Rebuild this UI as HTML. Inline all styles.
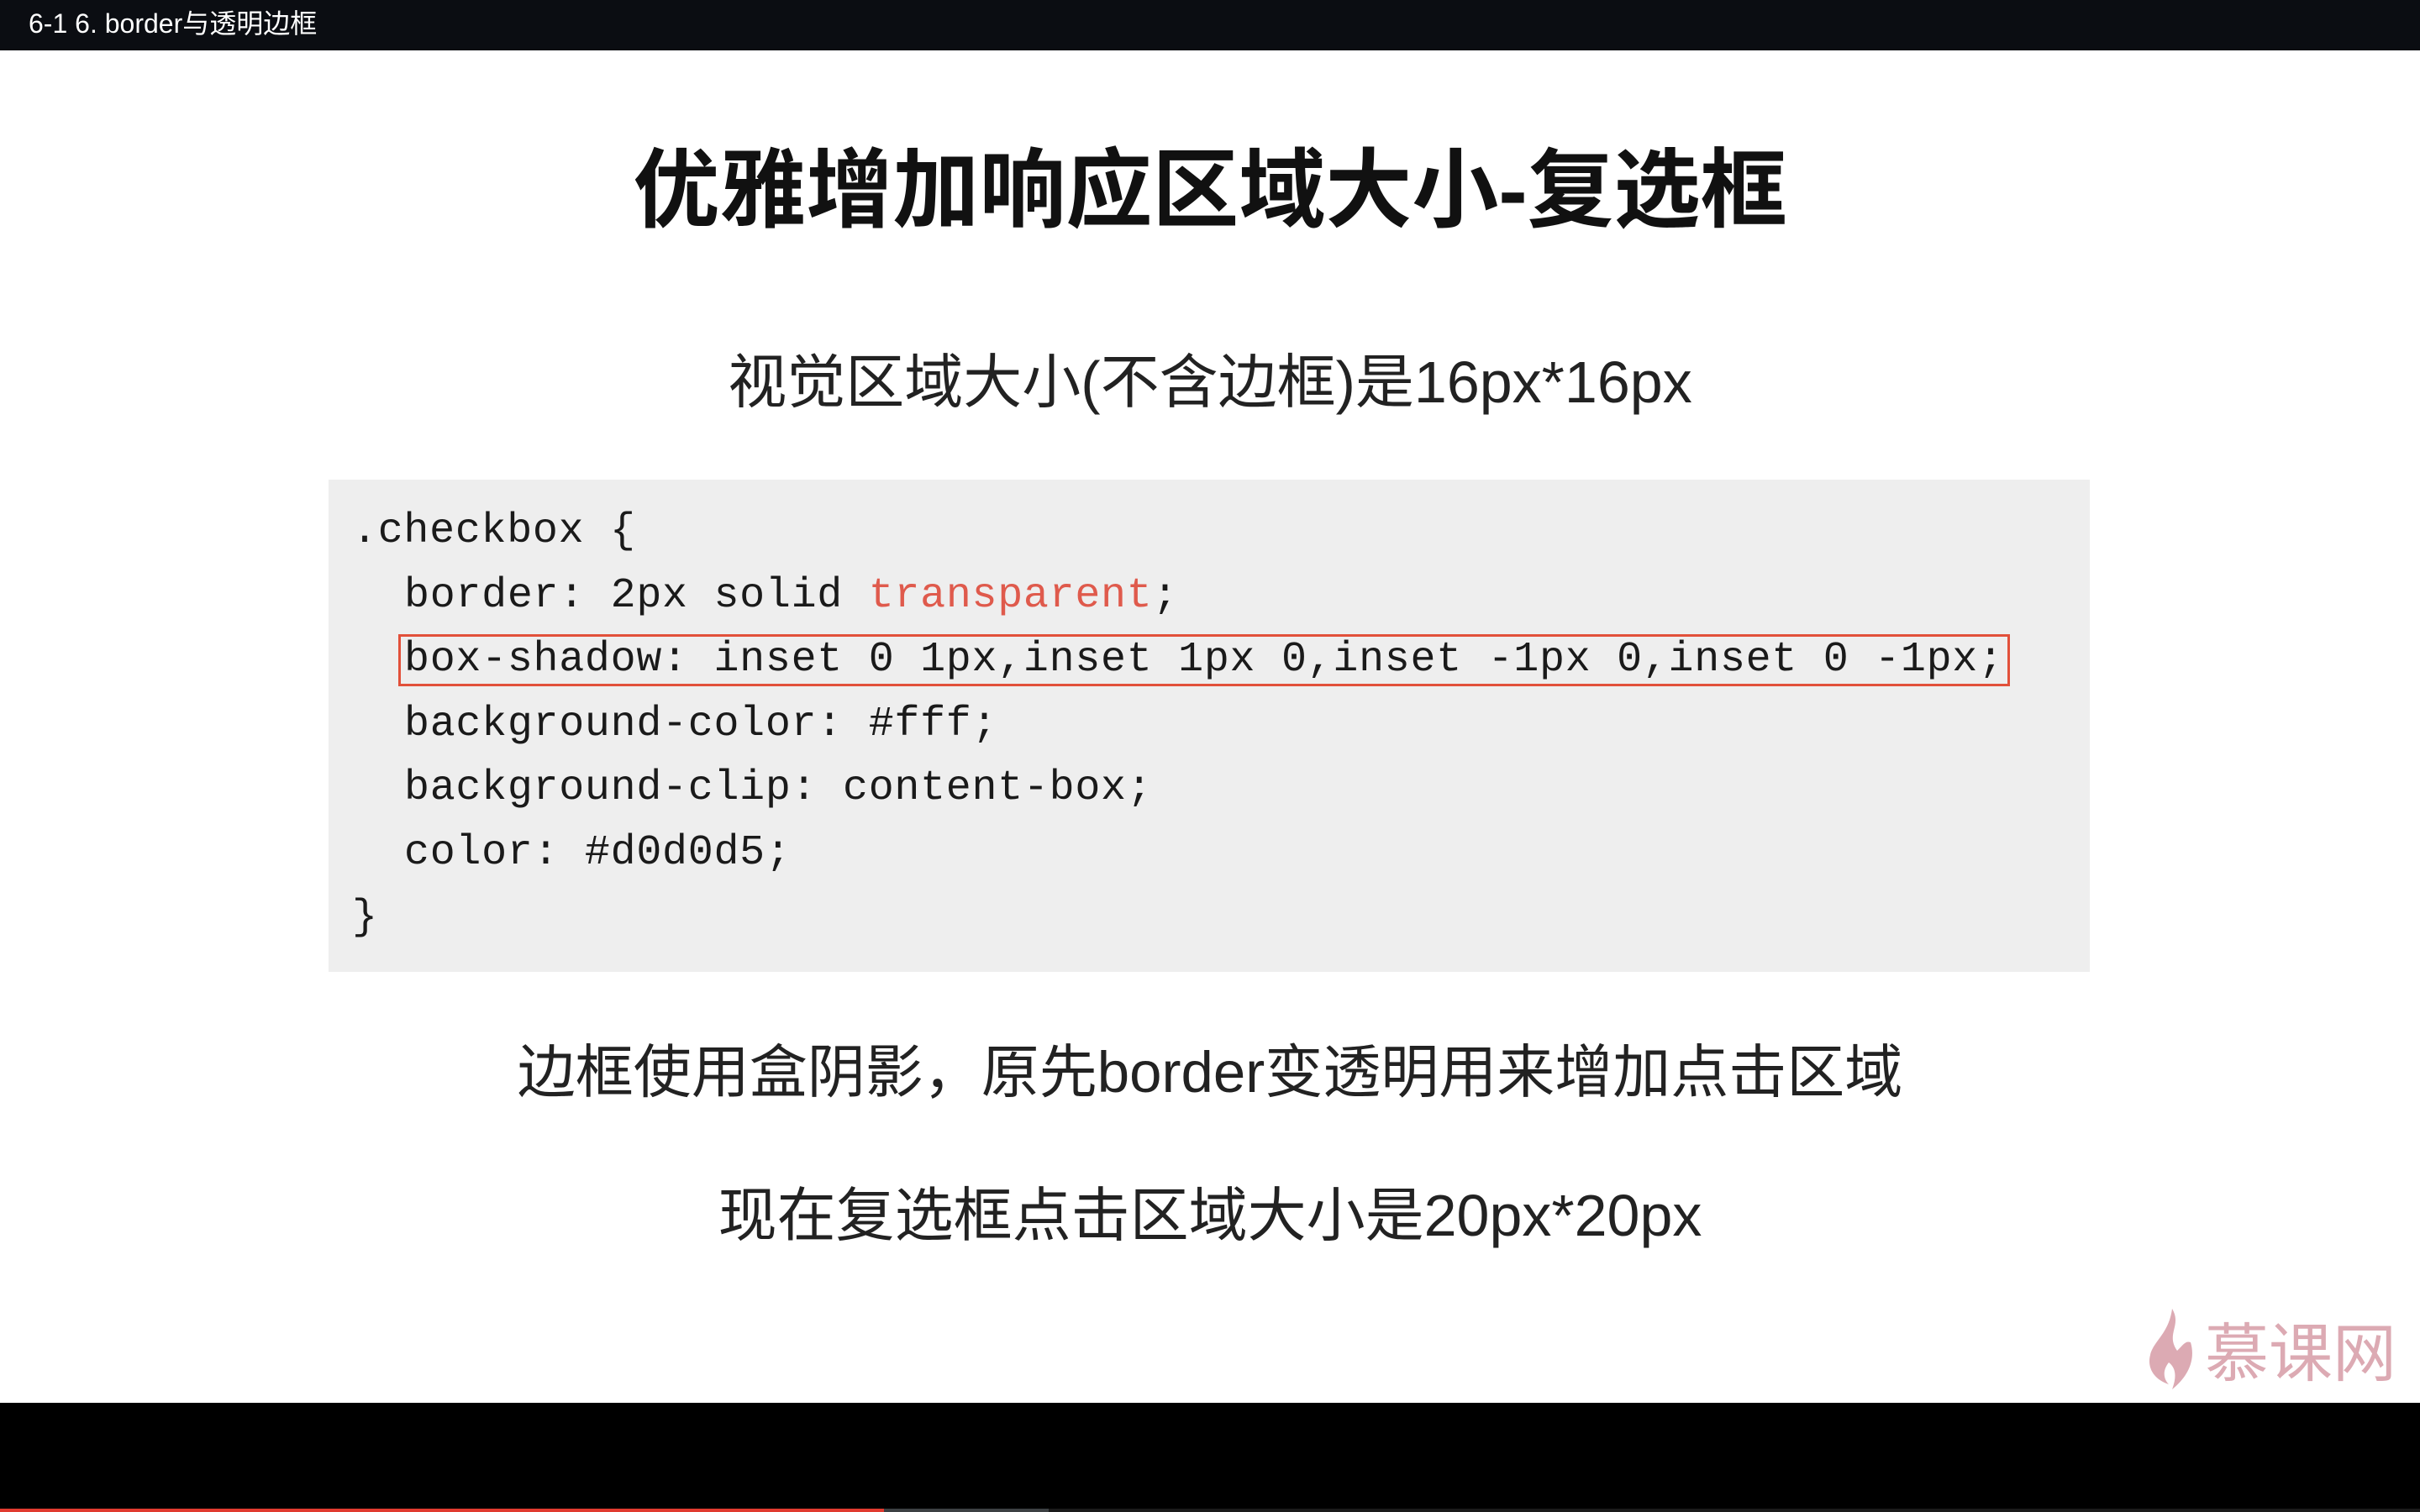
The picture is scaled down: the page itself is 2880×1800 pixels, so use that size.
<!DOCTYPE html>
<html><head><meta charset="utf-8"><style>
body{margin:0;width:2880px;height:1800px;background:#fff;position:relative;overflow:hidden;font-family:"Liberation Sans","Noto Sans CJK SC",sans-serif;}
.top{position:absolute;left:0;top:0;width:2880px;height:60px;background:#0b0d12;color:#fff;font-size:32px;line-height:60px;}
.top span{position:absolute;left:34px;top:-2px;}
.c{position:absolute;left:0;width:2880px;text-align:center;color:#111;white-space:nowrap;}
.code{position:absolute;left:391px;top:571px;width:2096px;height:586px;background:#eeeeee;}
.ln{position:absolute;font-family:"Liberation Mono",monospace;font-size:50px;color:#1a1a1a;white-space:pre;line-height:60px;letter-spacing:0.7px;}
.red{color:#df5a4c;}
.box{position:absolute;left:474px;top:755px;width:1912px;height:56px;border:3px solid #e2503a;}
.bot{position:absolute;left:0;top:1670px;width:2880px;height:130px;background:#000;}
</style></head><body>
<div class="top"><span>6-1 6. border与透明边框</span></div>
<div class="c" style="top:162px;font-size:103px;font-weight:bold;line-height:130px;">优雅增加响应区域大小-复选框</div>
<div class="c" style="top:413px;font-size:70px;line-height:84px;color:#222;">视觉区域大小(不含边框)是16px*16px</div>
<div class="code"></div>
<div class="ln" style="left:419px;top:603px;">.checkbox {</div>
<div class="ln" style="left:481px;top:680px;">border: 2px solid <span class="red">transparent</span>;</div>
<div class="ln" style="left:481px;top:756px;">box-shadow: inset 0 1px,inset 1px 0,inset -1px 0,inset 0 -1px;</div>
<div class="ln" style="left:481px;top:833px;">background-color: #fff;</div>
<div class="ln" style="left:481px;top:909px;">background-clip: content-box;</div>
<div class="ln" style="left:481px;top:986px;">color: #d0d0d5;</div>
<div class="ln" style="left:419px;top:1063px;">}</div>
<div class="box"></div>
<div class="c" style="top:1235px;font-size:69px;line-height:84px;color:#222;">边框使用盒阴影，原先border变透明用来增加点击区域</div>
<div class="c" style="top:1405px;font-size:70px;line-height:84px;color:#222;">现在复选框点击区域大小是20px*20px</div>
<svg style="position:absolute;left:2555px;top:1558px" width="60" height="100" viewBox="0 0 60 100"><path d="M30 0 C42 20 22 30 36 50 C44 42 46 38 52 40 C58 60 50 80 30 96 C36 80 34 70 26 64 C18 74 20 84 26 90 C8 84 0 70 4 55 C8 38 26 30 30 0Z" fill="#dcaab3"/></svg>
<div style="position:absolute;left:2624px;top:1568px;font-size:76px;line-height:90px;color:#dcaab3;">慕课网</div>
<div class="bot"></div>
<div style="position:absolute;left:0;top:1796px;width:1052px;height:4px;background:#e03a2f"></div>
<div style="position:absolute;left:1052px;top:1796px;width:196px;height:4px;background:#3c4043"></div>
<div style="position:absolute;left:1248px;top:1796px;width:1632px;height:4px;background:#1a1a1a"></div>
</body></html>
